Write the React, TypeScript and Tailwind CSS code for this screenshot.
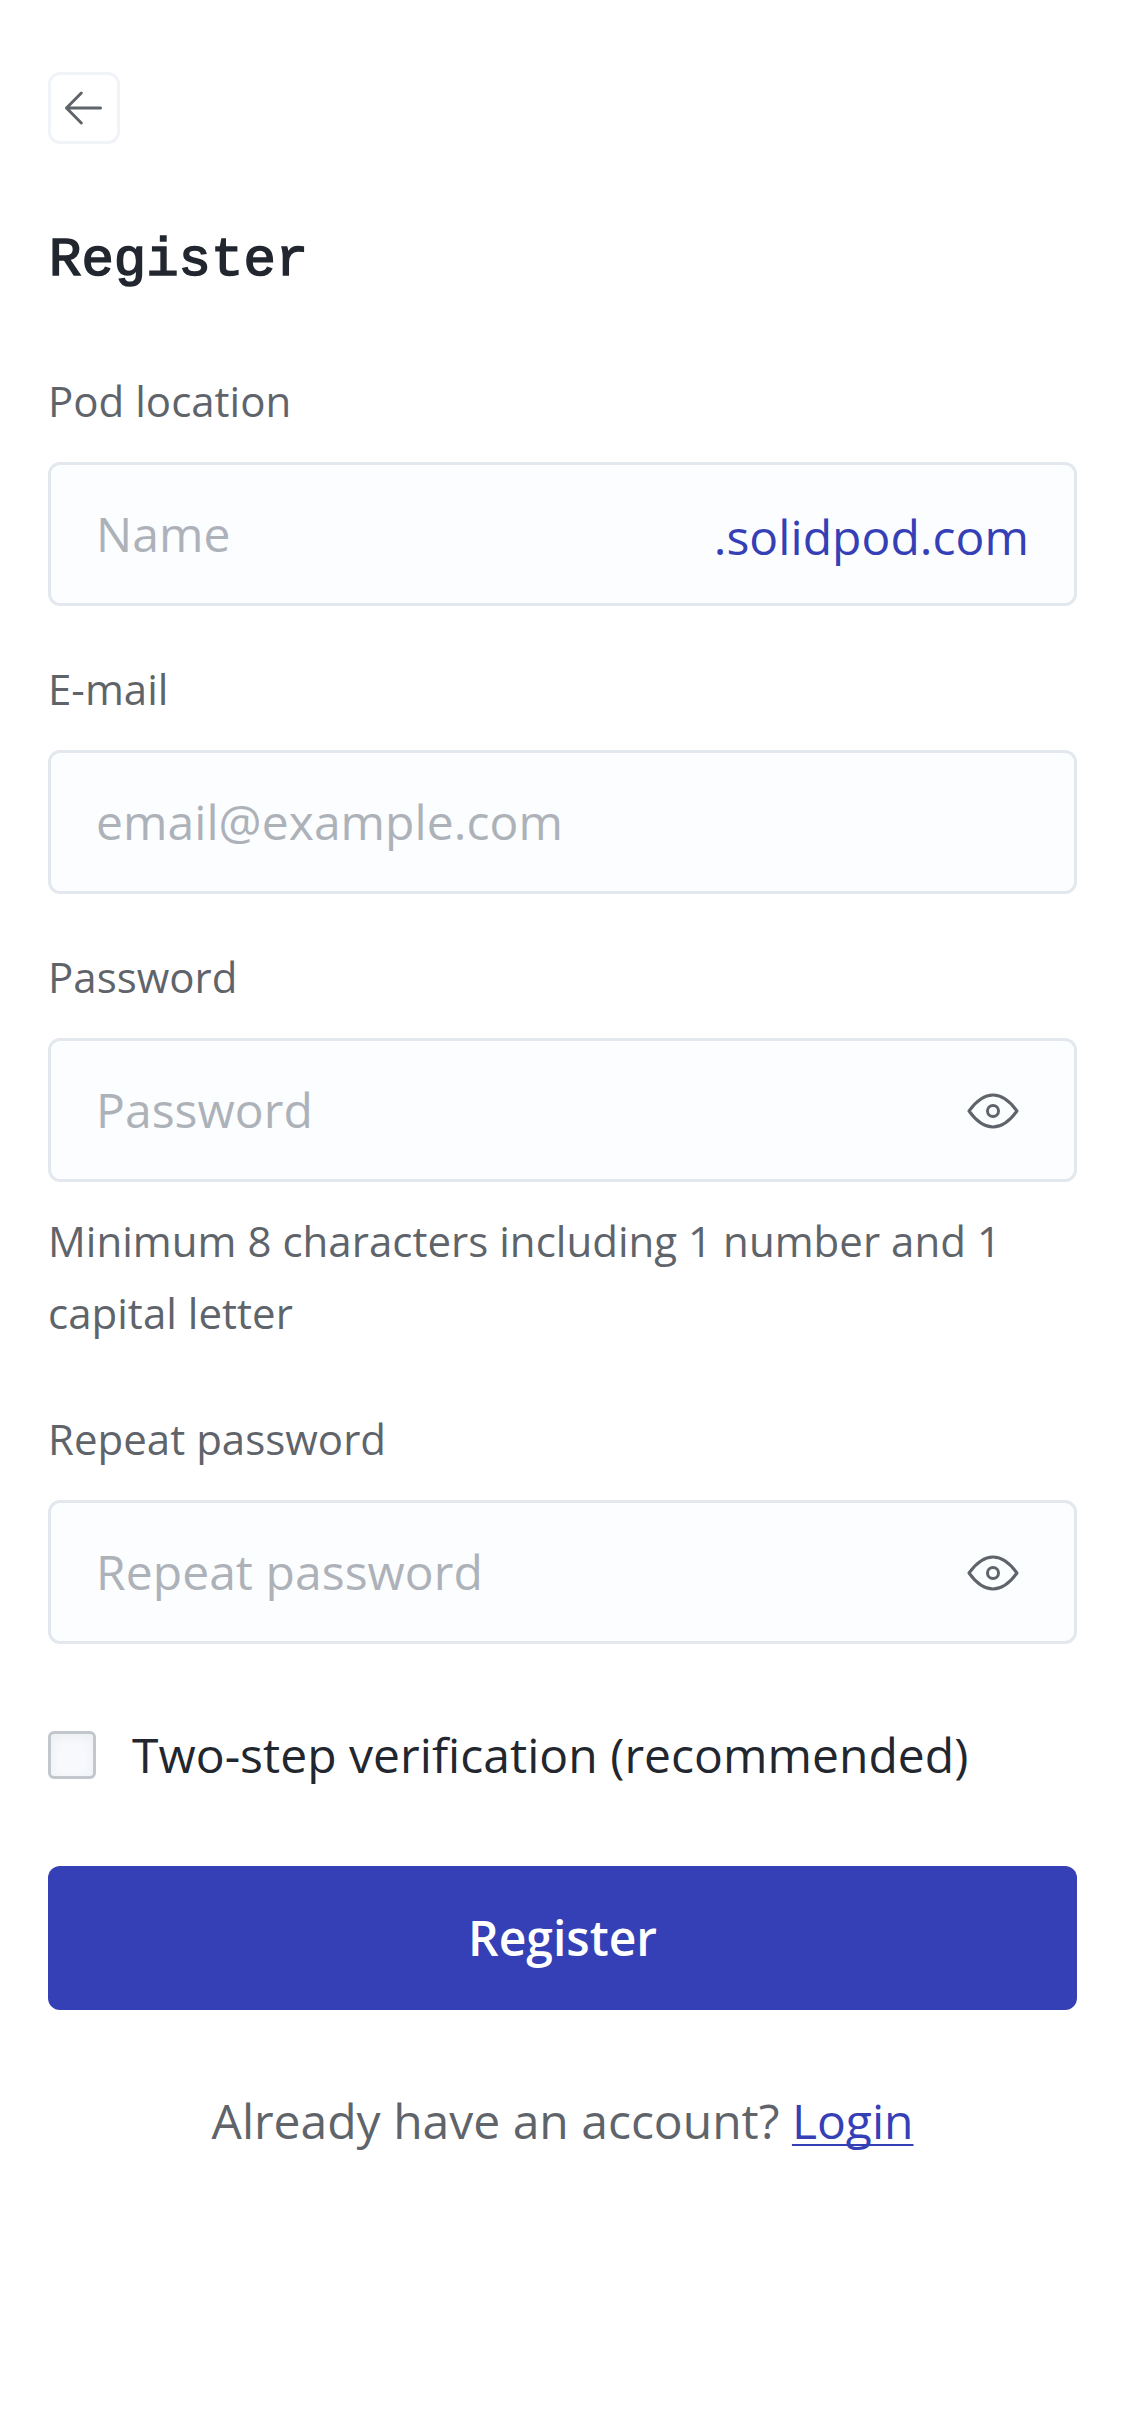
import React from "react";

function Eye() {
  return (
    <svg className="h-[72px] w-[72px] shrink-0" viewBox="0 0 72 72" fill="none" stroke="#5f646b" strokeWidth="3">
      <path d="M12 37C18.500 28 26 21 36 21S53.500 28 60 37C53.500 46 46 53 36 53S18.500 46 12 37Z" strokeLinejoin="round" />
      <circle cx="36" cy="37" r="5.500" />
    </svg>
  );
}

function Field({ label, placeholder, children }: { label: string; placeholder: string; children?: React.ReactNode }) {
  return (
    <label className="block">
      <span className="block h-[72px] text-[42px] leading-[70px] tracking-[0.02px] text-[#5f646b]">{label}</span>
      <span className="mt-[24px] flex h-[144px] items-center rounded-[12px] border-[3px] border-[#e3e8ee] bg-[#fcfdff] px-[45px]">
        <input placeholder={placeholder} className="min-w-0 flex-1 bg-transparent text-[48px] leading-[72px] tracking-[0.06px] outline-none placeholder:text-[#adb2b9]" />
        {children}
      </span>
    </label>
  );
}

export default function App() {
  return (
    <main className="h-[2436px] w-[1125px] bg-white px-[48px] pt-[72px] font-['Open_Sans',sans-serif] text-[#22272f]">
      <button aria-label="Back" className="flex h-[72px] w-[72px] items-center justify-center rounded-[12px] border-[3px] border-[#f0f3f7]">
        <svg className="h-[66px] w-[66px] shrink-0" viewBox="0 0 66 66" fill="none" stroke="#5f646b" strokeWidth="3" strokeLinecap="round" strokeLinejoin="round">
          <path d="M49.500 33H15.500M30.300 18L15.500 33L30.300 48" />
        </svg>
      </button>
      <h1 className="mt-[75px] h-[84px] pl-px font-['Liberation_Mono',monospace] text-[54px] font-normal leading-[84px] [-webkit-text-stroke:1.6px_#22272f]">Register</h1>
      <form className="mt-[63px]">
        <div className="flex flex-col gap-[48px]">
          <Field label="Pod location" placeholder="Name">
            <span className="pt-[6px] text-[48px] leading-[72px] tracking-[0.06px] text-[#3540b6]">.solidpod.com</span>
          </Field>
          <Field label="E-mail" placeholder="email@example.com" />
          <div>
            <Field label="Password" placeholder="Password"><Eye /></Field>
            <p className="mt-[23px] mb-[7px] text-[42px] leading-[72px] tracking-[0.03px] text-[#5f646b]">Minimum 8 characters including 1 number and 1 capital letter</p>
          </div>
          <Field label="Repeat password" placeholder="Repeat password"><Eye /></Field>
        </div>
        <label className="mt-[75px] flex h-[72px] items-center gap-[36px] text-[48px] tracking-[0.04px]">
          <span className="h-[48px] w-[48px] rounded-[6px] border-[3px] border-[#c2c7ce] bg-[#f7f9fd] shadow-[inset_0_3px_12px_rgba(0,0,0,0.05)]" />
          Two-step verification (recommended)
        </label>
        <button type="button" className="mt-[75px] h-[144px] w-full rounded-[12px] bg-[#3540b6] text-[48px] font-semibold text-white">Register</button>
      </form>
      <p className="mt-[75px] text-center text-[48px] leading-[72px] text-[#5f646b]">Already have an account? <a className="text-[#3540b6] underline decoration-[2px] underline-offset-[5px] [text-decoration-skip-ink:none]">Login</a></p>
    </main>
  );
}
